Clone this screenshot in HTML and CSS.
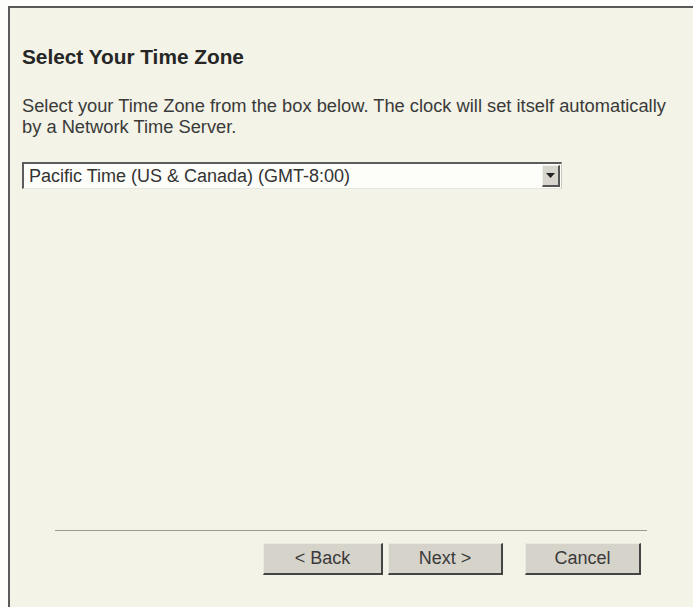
FILE: index.html
```html
<!DOCTYPE html>
<html lang="en">
<head>
  <meta charset="UTF-8">
  <title>Setup Wizard - Time Zone</title>
  <link rel="stylesheet" href="styles.css">
</head>
<body>
  <div class="panel">
    <h1>Select Your Time Zone</h1>
    <p class="intro">Select your Time Zone from the box below. The clock will set itself automatically<br>by a Network Time Server.</p>

    <div class="select">
      <span class="select-value">Pacific Time (US &amp; Canada) (GMT-8:00)</span>
      <span class="select-arrow">
        <svg width="9" height="5" viewBox="0 0 9 5"><path d="M0 0h9L4.5 5z" fill="#222"/></svg>
      </span>
    </div>

    <div class="spacer"></div>

    <div class="footer">
      <hr class="divider">
      <div class="buttons">
        <button type="button" class="btn btn-back">&lt; Back</button>
        <button type="button" class="btn btn-next">Next &gt;</button>
        <button type="button" class="btn btn-cancel">Cancel</button>
      </div>
    </div>
  </div>
</body>
</html>
```

FILE: styles.css
```css
html, body {
  height: 100%;
}
body {
  margin: 0;
  padding: 6px 0 0 8px;
  box-sizing: border-box;
  background-color: #fdfdfb;
  font-family: "Liberation Sans", Arial, sans-serif;
  color: #2a2a2a;
}
.panel {
  height: 100%;
  box-sizing: border-box;
  background-color: #f3f3e7;
  border-top: 2px solid #5a5a5a;
  border-left: 2px solid #5a5a5a;
  padding: 37px 0 0 12px;
  display: flex;
  flex-direction: column;
}
h1 {
  margin: 0 0 26px 0;
  font-size: 20.8px;
  line-height: 24px;
  font-weight: bold;
  color: #262626;
}
.intro {
  margin: 0 0 25px 0;
  font-size: 18.3px;
  line-height: 21px;
  color: #3a3a3a;
  white-space: nowrap;
}
.select {
  width: 540px;
  height: 27px;
  box-sizing: border-box;
  background-color: #fdfdfa;
  border-top: 2px solid #5c5c5c;
  border-left: 2px solid #5c5c5c;
  border-right: 1px solid #c8c8c0;
  border-bottom: 1px solid #e6e6dc;
  display: flex;
  align-items: center;
  justify-content: space-between;
}
.select-value {
  padding-left: 5px;
  font-size: 18px;
  color: #333;
}
.select-arrow {
  width: 18px;
  height: 22px;
  margin-right: 1px;
  background-color: #d8d5cc;
  border-top: 1px solid #f2f0ea;
  border-left: 1px solid #f2f0ea;
  border-right: 2px solid #555;
  border-bottom: 2px solid #555;
  box-sizing: border-box;
  display: flex;
  align-items: center;
  justify-content: center;
}
.spacer {
  flex: 1;
}
.footer {
  padding: 0 0 32px 33px;
}
.divider {
  width: 592px;
  margin: 0 0 12px 0;
  border: none;
  border-top: 1px solid #9a9a92;
}
.buttons {
  display: flex;
  padding-left: 208px;
}
.btn {
  height: 32px;
  box-sizing: border-box;
  background-color: #d6d3cb;
  border: none;
  border-top: 1px solid #ebe9e3;
  border-left: 1px solid #ebe9e3;
  border-right: 2px solid #444;
  border-bottom: 2px solid #444;
  font-family: "Liberation Sans", Arial, sans-serif;
  font-size: 18px;
  color: #3a3a3a;
}
.btn-back {
  width: 120px;
}
.btn-next {
  width: 115px;
  margin-left: 5px;
}
.btn-cancel {
  width: 116px;
  margin-left: 22px;
}
```
